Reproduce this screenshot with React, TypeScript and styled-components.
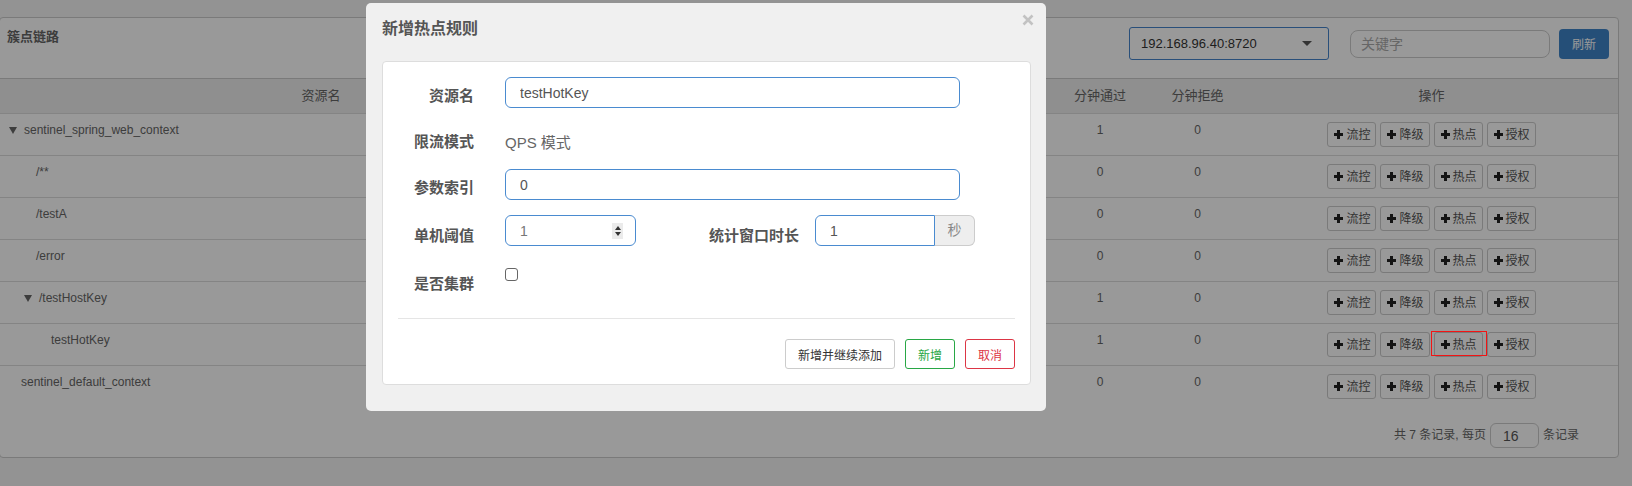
import React from 'react';
import styled, { createGlobalStyle, css } from 'styled-components';

const FONT = `"Liberation Sans", Arial, "Noto Sans CJK SC", sans-serif`;
const GRID = '642px 102px 102px 102px 102px 100px 95px 1fr';

type Resource = {
  name: string;
  level: number;
  branch?: boolean;
  passQps: number;
  blockQps: number;
  threads: number;
  rt: number;
  pass: number;
  block: number;
  highlight?: string;
};

const resources: Resource[] = [
  { name: 'sentinel_spring_web_context', level: 0, branch: true, passQps: 0, blockQps: 0, threads: 0, rt: 0, pass: 1, block: 0 },
  { name: '/**', level: 1, passQps: 0, blockQps: 0, threads: 0, rt: 0, pass: 0, block: 0 },
  { name: '/testA', level: 1, passQps: 0, blockQps: 0, threads: 0, rt: 0, pass: 0, block: 0 },
  { name: '/error', level: 1, passQps: 0, blockQps: 0, threads: 0, rt: 0, pass: 0, block: 0 },
  { name: '/testHostKey', level: 1, branch: true, passQps: 0, blockQps: 0, threads: 0, rt: 0, pass: 1, block: 0 },
  { name: 'testHotKey', level: 2, passQps: 0, blockQps: 0, threads: 0, rt: 0, pass: 1, block: 0, highlight: '热点' },
  { name: 'sentinel_default_context', level: 0, passQps: 0, blockQps: 0, threads: 0, rt: 0, pass: 0, block: 0 },
];

const columns = ['资源名', '通过QPS', '拒绝QPS', '并发数', '平均RT', '分钟通过', '分钟拒绝', '操作'];
const actions = ['流控', '降级', '热点', '授权'];

const PlusIcon = () => (
  <svg width="9" height="9" viewBox="0 0 9 9">
    <rect x="3" y="0" width="3" height="9" fill="#222" />
    <rect x="0" y="3" width="9" height="3" fill="#222" />
  </svg>
);

const App: React.FC = () => {
  return (
    <Page>
      <GlobalStyle />
      <Card>
        <CardHeader>
          <CardTitle>簇点链路</CardTitle>
          <Controls>
            <MachineSelect>
              192.168.96.40:8720
              <Caret />
            </MachineSelect>
            <SearchInput placeholder="关键字" />
            <RefreshButton>刷新</RefreshButton>
          </Controls>
        </CardHeader>

        <HeadRow>
          {columns.map((c) => (
            <HeadCell key={c}>{c}</HeadCell>
          ))}
        </HeadRow>
        <TableBody>
          {resources.map((r) => (
            <BodyRow key={r.name}>
              <NameCell $indent={r.level * 15 + (r.branch ? 9 : 21)}>
                {r.branch && <Triangle />}
                {r.name}
              </NameCell>
              <NumCell>{r.passQps}</NumCell>
              <NumCell>{r.blockQps}</NumCell>
              <NumCell>{r.threads}</NumCell>
              <NumCell>{r.rt}</NumCell>
              <NumCell>{r.pass}</NumCell>
              <NumCell>{r.block}</NumCell>
              <OpsCell>
                {actions.map((a) => (
                  <OpButton key={a} $highlight={r.highlight === a}>
                    <PlusIcon />
                    {a}
                  </OpButton>
                ))}
              </OpsCell>
            </BodyRow>
          ))}
        </TableBody>
        <Footer>
          <span>共 7 条记录, 每页</span>
          <PageSize defaultValue="16" />
          <span>条记录</span>
        </Footer>
      </Card>

      <Backdrop />
      <Modal>
        <CloseButton aria-label="关闭">
          <svg width="12" height="12" viewBox="0 0 12 12">
            <path d="M1.5 1.5 L10.5 10.5 M10.5 1.5 L1.5 10.5" stroke="#c2c2c2" strokeWidth="2.6" />
          </svg>
        </CloseButton>
        <ModalTitle>新增热点规则</ModalTitle>
        <FormPanel>
          <FormGroup>
            <Label>资源名</Label>
            <TextInput defaultValue="testHotKey" />
          </FormGroup>
          <FormGroup>
            <Label>限流模式</Label>
            <StaticText>QPS 模式</StaticText>
          </FormGroup>
          <FormGroup>
            <Label>参数索引</Label>
            <TextInput defaultValue="0" />
          </FormGroup>
          <FormGroup>
            <Label $top={11}>单机阈值</Label>
            <NumberBox>
              1
              <Spinner>
                <ArrowUp />
                <ArrowDown />
              </Spinner>
            </NumberBox>
            <Label $width={163} $gap={16} $top={11}>
              统计窗口时长
            </Label>
            <InputGroup>
              <GroupInput defaultValue="1" />
              <Addon>秒</Addon>
            </InputGroup>
          </FormGroup>
          <FormGroup>
            <Label $top={13}>是否集群</Label>
            <Checkbox type="checkbox" />
          </FormGroup>
          <Divider />
          <ButtonBar>
            <DialogButton $tone="default">新增并继续添加</DialogButton>
            <DialogButton $tone="success">新增</DialogButton>
            <DialogButton $tone="danger">取消</DialogButton>
          </ButtonBar>
        </FormPanel>
      </Modal>
    </Page>
  );
};

const GlobalStyle = createGlobalStyle`
  * { box-sizing: border-box; }
  html, body { margin: 0; padding: 0; }
  body {
    background: #f6f6f6;
    font-family: ${FONT};
    font-size: 12px;
    line-height: 20px;
    color: #666;
    overflow: hidden;
  }
  input, button { font-family: ${FONT}; }
`;

const Page = styled.div`
  padding-top: 17px;
  min-height: 486px;
`;

const Card = styled.div`
  margin: 0 13px 0 -1px;
  background: #fff;
  border: 1px solid #ccc;
  border-radius: 4px;
`;

const CardHeader = styled.div`
  display: flex;
  justify-content: space-between;
  align-items: flex-start;
  height: 61px;
  padding: 9px 9px 0 7px;
  border-bottom: 1px solid #ccc;
`;

const CardTitle = styled.div`
  font-size: 13px;
  font-weight: bold;
  line-height: 20px;
  color: #666;
`;

const Controls = styled.div`
  display: flex;
  align-items: center;
  height: 33px;
`;

const MachineSelect = styled.div`
  display: flex;
  align-items: center;
  justify-content: space-between;
  width: 200px;
  height: 33px;
  padding: 0 16px 0 11px;
  border: 1px solid #4584cc;
  border-radius: 3px;
  font-size: 13px;
  color: #333;
`;

const Caret = styled.span`
  width: 0;
  height: 0;
  border-left: 5px solid transparent;
  border-right: 5px solid transparent;
  border-top: 5px solid #555;
`;

const SearchInput = styled.input`
  width: 200px;
  height: 28px;
  margin-left: 21px;
  padding: 0 10px;
  border: 1px solid #ccc;
  border-radius: 8px;
  font-size: 14px;
  outline: none;
  &::placeholder {
    color: #aaa;
  }
`;

const RefreshButton = styled.button`
  width: 50px;
  height: 30px;
  margin-left: 9px;
  padding: 0;
  background: #3f84c8;
  color: #fff;
  border: none;
  border-radius: 4px;
  font-size: 12px;
`;

const HeadRow = styled.div`
  display: grid;
  grid-template-columns: ${GRID};
  height: 35px;
  background: #eee;
  border-bottom: 1px solid #ddd;
`;

const HeadCell = styled.div`
  text-align: center;
  font-size: 13px;
  line-height: 34px;
  color: #666;
  white-space: nowrap;
`;

const TableBody = styled.div``;

const BodyRow = styled.div`
  display: grid;
  grid-template-columns: ${GRID};
  height: 42px;
  border-bottom: 1px solid #ddd;
  &:last-child {
    border-bottom: none;
  }
`;

const NameCell = styled.div<{ $indent: number }>`
  padding: 6px 0 0 ${(p) => p.$indent}px;
  white-space: nowrap;
  color: #666;
`;

const Triangle = styled.span`
  display: inline-block;
  width: 0;
  height: 0;
  margin-right: 7px;
  border-left: 4.5px solid transparent;
  border-right: 4.5px solid transparent;
  border-top: 7px solid #666;
  vertical-align: middle;
`;

const NumCell = styled.div`
  padding-top: 6px;
  text-align: center;
  color: #666;
`;

const OpsCell = styled.div`
  display: flex;
  justify-content: center;
  gap: 4px;
  padding-top: 8px;
`;

const OpButton = styled.button<{ $highlight?: boolean }>`
  position: relative;
  display: inline-flex;
  align-items: center;
  gap: 3px;
  height: 25px;
  padding: 0 5px 0 6px;
  background: #fff;
  border: 1px solid #ccc;
  border-radius: 3px;
  font-size: 12px;
  line-height: 1;
  color: #555;
  ${(p) =>
    p.$highlight &&
    css`
      &::after {
        content: '';
        position: absolute;
        top: -2px;
        right: -5px;
        bottom: 0;
        left: -4px;
        border: 1px solid #f21414;
        z-index: 1100;
      }
    `}
`;

const Footer = styled.div`
  display: flex;
  justify-content: flex-end;
  align-items: flex-start;
  gap: 4px;
  height: 49px;
  padding: 15px 39px 0 0;
  font-size: 12px;
  color: #666;
  & > span {
    line-height: 25px;
  }
`;

const PageSize = styled.input`
  width: 49px;
  height: 25px;
  padding: 0 12px;
  border: 1px solid #ccc;
  border-radius: 6px;
  font-size: 14px;
  color: #555;
`;

const Backdrop = styled.div`
  position: fixed;
  inset: 0;
  background: rgba(0, 0, 0, 0.4);
  z-index: 1000;
`;

const Modal = styled.div`
  position: fixed;
  top: 3px;
  left: 366px;
  width: 680px;
  padding: 16px 15px 26px 16px;
  background: #f0f0f0;
  border-radius: 5px;
  z-index: 1001;
`;

const CloseButton = styled.button`
  position: absolute;
  top: 11px;
  right: 12px;
  width: 12px;
  height: 12px;
  padding: 0;
  border: none;
  background: none;
  display: flex;
`;

const ModalTitle = styled.div`
  margin-bottom: 22px;
  font-size: 16px;
  font-weight: bold;
  line-height: 20px;
  color: #555;
`;

const FormPanel = styled.div`
  padding: 15px;
  background: #fff;
  border: 1px solid #ddd;
  border-radius: 4px;
`;

const FormGroup = styled.div`
  display: flex;
  align-items: flex-start;
  min-height: 31px;
  margin-bottom: 15px;
`;

const Label = styled.div<{ $width?: number; $gap?: number; $top?: number }>`
  width: ${(p) => p.$width ?? 76}px;
  margin-right: ${(p) => p.$gap ?? 31}px;
  padding-top: ${(p) => p.$top ?? 9}px;
  text-align: right;
  font-size: 15px;
  font-weight: bold;
  line-height: 20px;
  color: #555;
  white-space: nowrap;
`;

const fieldBorder = css`
  height: 31px;
  border: 1px solid #4a8bd0;
  font-size: 14px;
  color: #555;
  outline: none;
`;

const TextInput = styled.input`
  ${fieldBorder};
  width: 455px;
  padding: 0 14px;
  border-radius: 6px;
`;

const StaticText = styled.div`
  padding-top: 10px;
  font-size: 15px;
  line-height: 20px;
  color: #666;
`;

const NumberBox = styled.div`
  ${fieldBorder};
  display: flex;
  align-items: center;
  justify-content: space-between;
  width: 131px;
  padding: 0 12px 0 14px;
  border-radius: 6px;
  color: #777;
`;

const Spinner = styled.span`
  display: flex;
  flex-direction: column;
  align-items: center;
  justify-content: center;
  gap: 2px;
  width: 11px;
  height: 16px;
  background: #ebebeb;
`;

const ArrowUp = styled.span`
  width: 0;
  height: 0;
  border-left: 3.5px solid transparent;
  border-right: 3.5px solid transparent;
  border-bottom: 4px solid #333;
`;

const ArrowDown = styled.span`
  width: 0;
  height: 0;
  border-left: 3.5px solid transparent;
  border-right: 3.5px solid transparent;
  border-top: 4px solid #333;
`;

const InputGroup = styled.div`
  display: flex;
  width: 160px;
`;

const GroupInput = styled.input`
  ${fieldBorder};
  width: 120px;
  padding: 0 14px;
  border-radius: 6px 0 0 6px;
`;

const Addon = styled.span`
  width: 40px;
  height: 31px;
  background: #eee;
  border: 1px solid #ccc;
  border-left: none;
  border-radius: 0 6px 6px 0;
  text-align: center;
  font-size: 14px;
  line-height: 29px;
  color: #888;
`;

const Checkbox = styled.input`
  appearance: none;
  width: 13px;
  height: 13px;
  margin: 7px 0 0;
  border: 1px solid #666;
  border-radius: 3px;
  background: #fff;
`;

const Divider = styled.div`
  margin: 24px 0 20px;
  border-top: 1px solid #e5e5e5;
`;

const ButtonBar = styled.div`
  display: flex;
  justify-content: flex-end;
  gap: 10px;
`;

const tones = {
  default: { border: '#ccc', color: '#333' },
  success: { border: '#28a745', color: '#28a745' },
  danger: { border: '#dc3545', color: '#dc3545' },
};

const DialogButton = styled.button<{ $tone: keyof typeof tones }>`
  height: 30px;
  padding: 0 12px;
  background: #fff;
  border: 1px solid ${(p) => tones[p.$tone].border};
  border-radius: 3px;
  font-size: 12px;
  color: ${(p) => tones[p.$tone].color};
`;

export default App;
